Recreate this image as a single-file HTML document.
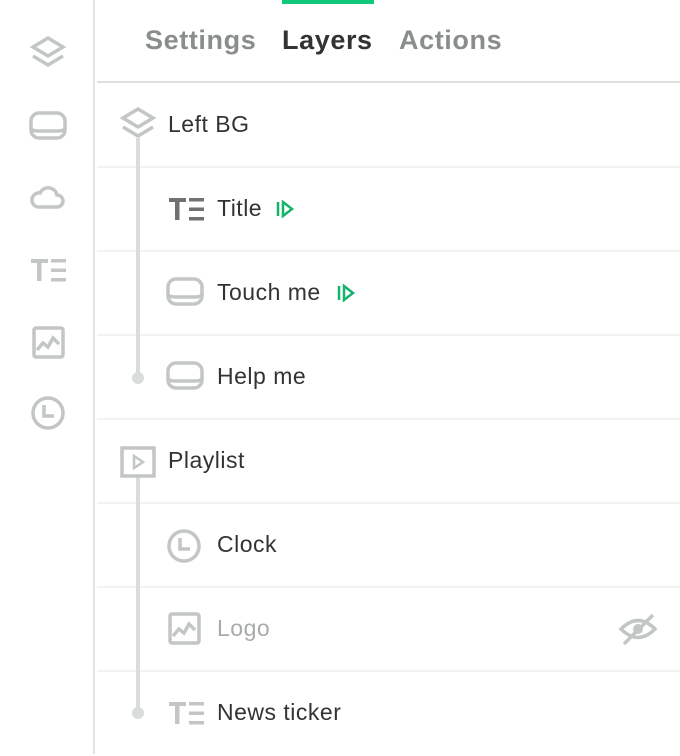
<!DOCTYPE html>
<html><head><meta charset="utf-8"><style>
*{margin:0;padding:0;box-sizing:border-box}
body{width:680px;height:754px;background:#fff;font-family:"Liberation Sans",sans-serif;position:relative;overflow:hidden}
.side{position:absolute;left:0;top:0;width:95px;height:754px;border-right:2px solid #e2e4e4}
.ic{position:absolute}
.hdr{position:absolute;left:97px;top:0;right:0;height:83px;border-bottom:2px solid #dcdfdf}
.tab{position:absolute;top:25px;font-size:27px;font-weight:bold;color:#8a8d8d;letter-spacing:0.6px}
.row{position:absolute;left:97px;right:0;height:84px;border-bottom:2px solid #f1f2f2}
.lbl{position:absolute;font-size:23px;color:#333;top:28px;letter-spacing:0.5px}
.vl{position:absolute;left:136px;width:4px;background:#d9dcdc}
.dot{position:absolute;left:132px;width:12px;height:12px;border-radius:50%;background:#d9dcdc}
</style></head><body>
<svg width="0" height="0" style="position:absolute">
<defs>
<g id="layers" fill="none" stroke-width="3.5"><path d="M18 3 L33 12 L18 21 L3 12 Z"/><path d="M3 21 L18 30 L33 21"/></g>
<g id="btn" fill="none" stroke-width="3.5"><rect x="2" y="3" width="34" height="25" rx="8"/><path d="M2 18 Q2 21 10 21 H28 Q36 21 36 18"/></g>
<g id="cloud" fill="none" stroke-width="3.5"><path d="M9 27 H28 A6 6 0 0 0 28 15 A9 9 0 0 0 11 13 A7 7 0 0 0 9 27 Z"/></g>
<g id="text"><rect x="1" y="4" width="17" height="4"/><rect x="7" y="4" width="4.5" height="22"/><rect x="21" y="4" width="15" height="3.5"/><rect x="21" y="13.5" width="15" height="3.5"/><rect x="21" y="23" width="15" height="3.5"/></g>
<g id="img" fill="none" stroke-width="3.5"><rect x="3" y="3" width="29" height="29" rx="2"/><path d="M6 25 L12 18 L17 22 L22 13 L28 19"/></g>
<g id="clock" fill="none" stroke-width="3.5"><circle cx="18" cy="18" r="15"/><path d="M14 10 V21 H24"/></g>
<g id="pl" fill="none" stroke-width="3.5"><rect x="3" y="3" width="32" height="28"/><path d="M15 11 L24 17 L15 23 Z" stroke-width="2.5"/></g>
<g id="go" fill="none" stroke="#16b46a" stroke-width="2.5"><path d="M2 2 V16"/><path d="M7 2 L16 9 L7 16 Z"/></g>
</defs></svg>

<div class="side">
<svg class="ic" style="left:30px;top:35px" width="36" height="36" stroke="#c3c6c6"><use href="#layers"/></svg>
<svg class="ic" style="left:29px;top:110px" width="38" height="32" stroke="#c3c6c6"><use href="#btn"/></svg>
<svg class="ic" style="left:29px;top:180px" width="38" height="32" stroke="#c3c6c6"><use href="#cloud"/></svg>
<svg class="ic" style="left:30px;top:255px" width="38" height="30" fill="#c3c6c6"><use href="#text"/></svg>
<svg class="ic" style="left:31px;top:325px" width="36" height="36" stroke="#c3c6c6"><use href="#img"/></svg>
<svg class="ic" style="left:30px;top:395px" width="36" height="36" stroke="#c3c6c6"><use href="#clock"/></svg>
</div>

<div class="hdr">
<div style="position:absolute;left:185px;top:0;width:92px;height:4px;background:#10c77a"></div>
<div class="tab" style="left:48px">Settings</div>
<div class="tab" style="left:185px;color:#333">Layers</div>
<div class="tab" style="left:302px">Actions</div>
</div>

<div class="row" style="top:84px"></div>
<div class="row" style="top:168px"></div>
<div class="row" style="top:252px"></div>
<div class="row" style="top:336px"></div>
<div class="row" style="top:420px"></div>
<div class="row" style="top:504px"></div>
<div class="row" style="top:588px"></div>
<div class="row" style="top:672px;border-bottom:none"></div>

<div class="vl" style="top:138px;height:240px"></div><div class="dot" style="top:372px"></div>
<div class="vl" style="top:476px;height:238px"></div><div class="dot" style="top:707px"></div>

<svg class="ic" style="left:120px;top:106px" width="36" height="36" stroke="#c3c6c6"><use href="#layers"/></svg>
<div class="lbl" style="left:168px;top:111px">Left BG</div>

<svg class="ic" style="left:168px;top:194px" width="38" height="30" fill="#6f7272"><use href="#text"/></svg>
<div class="lbl" style="left:217px;top:195px">Title</div>
<svg class="ic" style="left:276px;top:200px" width="20" height="18"><use href="#go"/></svg>

<svg class="ic" style="left:166px;top:276px" width="38" height="32" stroke="#c3c6c6"><use href="#btn"/></svg>
<div class="lbl" style="left:217px;top:279px">Touch me</div>
<svg class="ic" style="left:337px;top:284px" width="20" height="18"><use href="#go"/></svg>

<svg class="ic" style="left:166px;top:360px" width="38" height="32" stroke="#c3c6c6"><use href="#btn"/></svg>
<div class="lbl" style="left:217px;top:363px">Help me</div>

<svg class="ic" style="left:119px;top:445px" width="38" height="34" stroke="#c3c6c6"><use href="#pl"/></svg>
<div class="lbl" style="left:168px;top:447px">Playlist</div>

<svg class="ic" style="left:166px;top:528px" width="36" height="36" stroke="#c3c6c6"><use href="#clock"/></svg>
<div class="lbl" style="left:217px;top:531px">Clock</div>

<svg class="ic" style="left:167px;top:611px" width="36" height="36" stroke="#c3c6c6"><use href="#img"/></svg>
<div class="lbl" style="left:217px;top:615px;color:#a8abab">Logo</div>
<svg class="ic" style="left:618px;top:612px" width="40" height="34" fill="none" stroke="#c3c6c6" stroke-width="3.5"><path d="M3 17 Q20 0 37 17 Q20 34 3 17 Z"/><circle cx="20" cy="17" r="5" fill="#c3c6c6" stroke="none"/><path d="M35 3 L6 32"/></svg>

<svg class="ic" style="left:168px;top:698px" width="38" height="30" fill="#c3c6c6"><use href="#text"/></svg>
<div class="lbl" style="left:217px;top:699px">News ticker</div>
</body></html>
